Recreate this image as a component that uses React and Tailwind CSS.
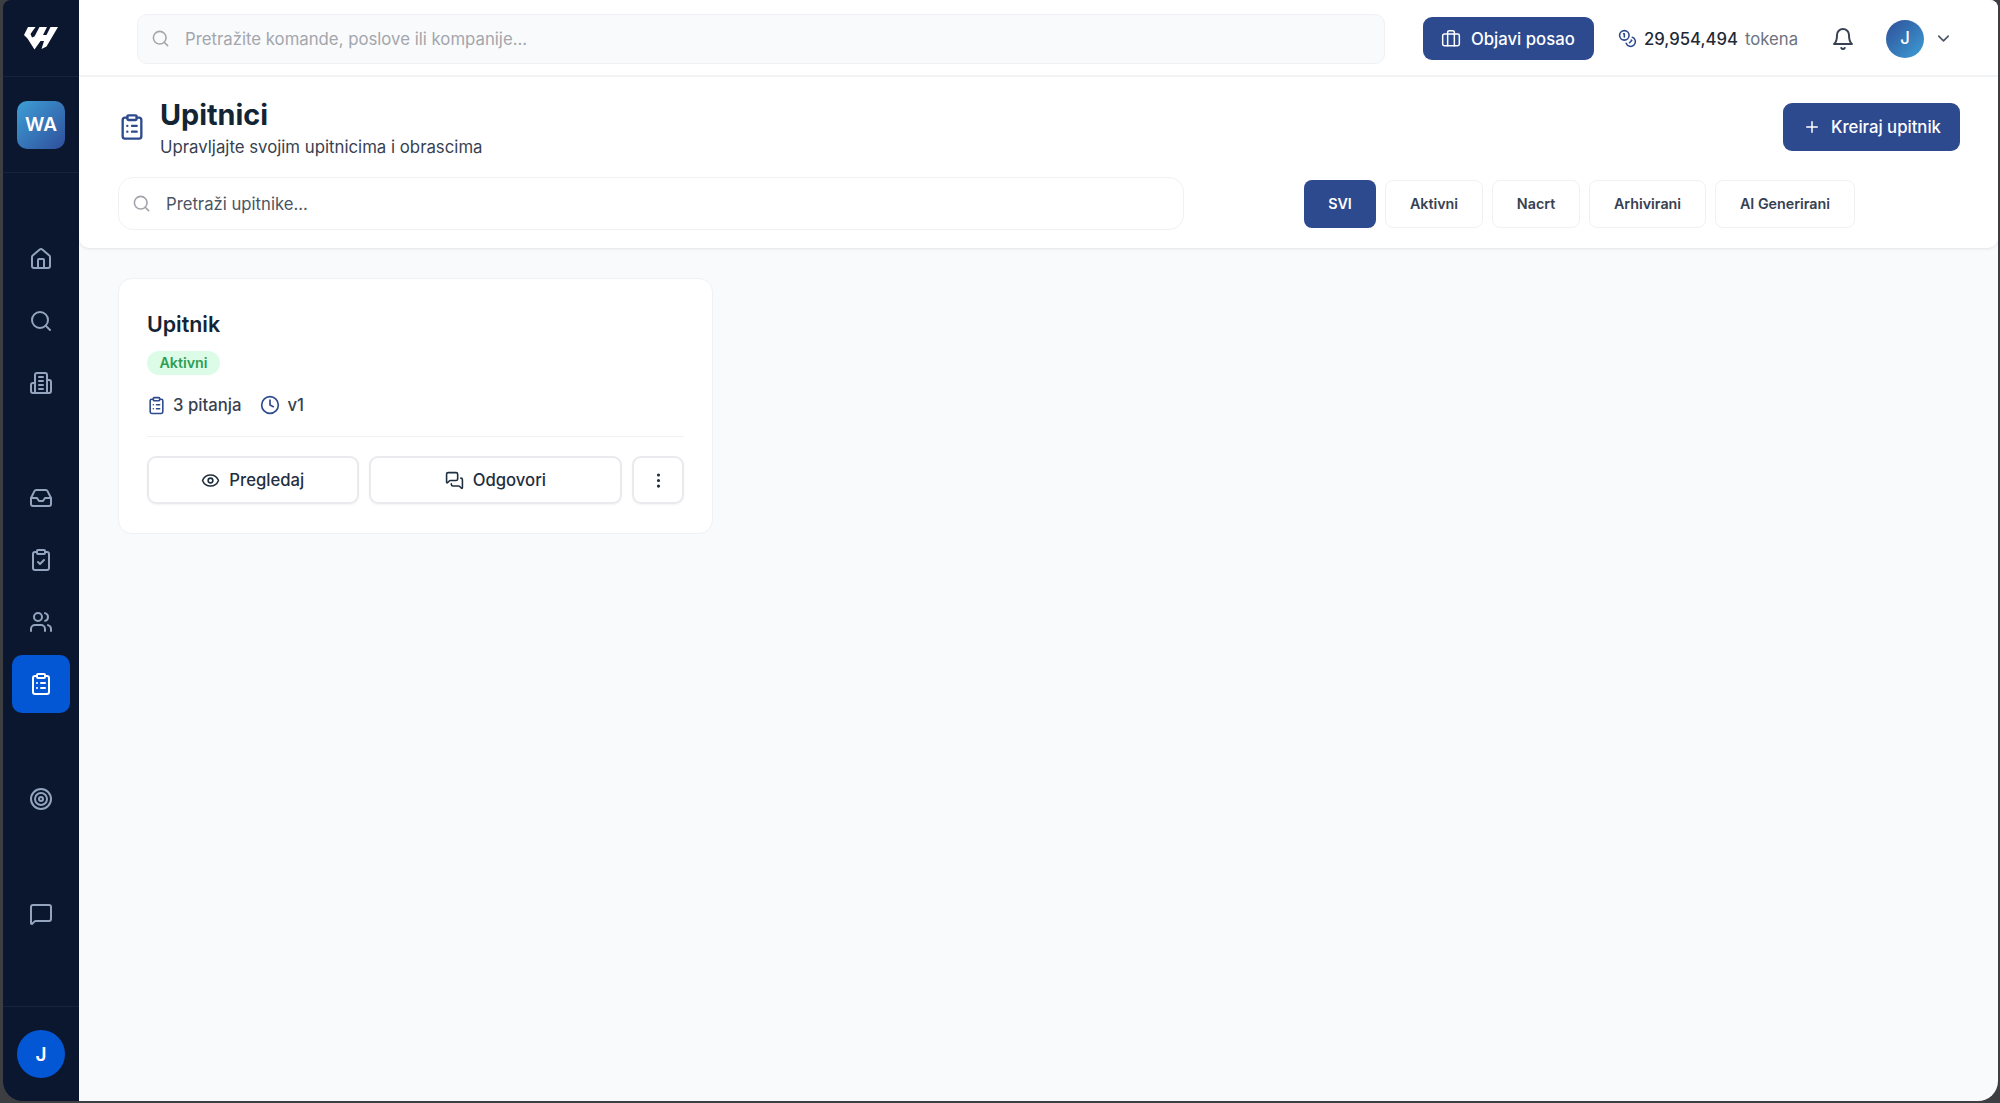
import { Search, House, Inbox, ClipboardCheck, Users, ClipboardList, Target, MessageSquare, Coins, ChevronDown, Plus, Clock, Eye, MessagesSquare, EllipsisVertical } from "lucide-react";

function Svg({ size, children, className, strokeWidth = 2 }) {
  return (
    <svg width={size} height={size} viewBox="0 0 24 24" fill="none" stroke="currentColor" strokeWidth={strokeWidth} strokeLinecap="round" strokeLinejoin="round" className={className}>
      {children}
    </svg>
  );
}

function Building({ size }) {
  return (
    <Svg size={size}>
      <path d="M6 22V4a2 2 0 0 1 2-2h8a2 2 0 0 1 2 2v18Z" />
      <path d="M6 12H4a2 2 0 0 0-2 2v6a2 2 0 0 0 2 2h2" />
      <path d="M18 9h2a2 2 0 0 1 2 2v9a2 2 0 0 1-2 2h-2" />
      <path d="M10 6h4M10 10h4M10 14h4M10 18h4" />
    </Svg>
  );
}

function Case({ size }) {
  return (
    <Svg size={size} strokeWidth={1.8}>
      <rect x="2" y="6" width="20" height="14" rx="2" />
      <path d="M16 20V4a2 2 0 0 0-2-2h-4a2 2 0 0 0-2 2v16" />
    </Svg>
  );
}

function Bell({ size, className }) {
  return (
    <Svg size={size} className={className}>
      <path d="M6 8a6 6 0 0 1 12 0c0 7 3 9 3 9H3s3-2 3-9" />
      <path d="M10.300 21a1.940 1.940 0 0 0 3.400 0" />
    </Svg>
  );
}

function Logo() {
  return (
    <svg width="34" height="23" viewBox="0 0 34 23" fill="#fff">
      <path d="M4 0H11.500L6.500 7L8 10.500L10.500 9.500L15.500 0H23L19 8H22.500L26.500 0H34L22.500 19.500L17.500 22L20 14H16.500L10.500 22.500L3.500 11.500L0 8Z" />
    </svg>
  );
}

function NavItem({ icon: Icon, active }) {
  return (
    <div className={`flex size-[58px] shrink-0 items-center justify-center rounded-[10px] ${active ? "bg-[#0457d4] text-white" : "text-[#94a3be]"}`}>
      <Icon size={24} />
    </div>
  );
}

const groups = [
  [{ icon: House }, { icon: Search }, { icon: Building }],
  [{ icon: Inbox }, { icon: ClipboardCheck }, { icon: Users }, { icon: ClipboardList, active: true }],
  [{ icon: Target }],
  [{ icon: MessageSquare }],
];

function Sidebar() {
  return (
    <aside className="flex w-[76px] shrink-0 flex-col items-center bg-[#0b172f]">
      <div className="flex h-[77px] w-full items-center justify-center border-b border-[#15233d]">
        <Logo />
      </div>
      <div className="flex h-24 w-full items-center justify-center border-b border-[#15233d]">
        <div className="flex size-12 items-center justify-center rounded-[10px] bg-linear-to-br from-[#3d9fd6] to-[#2f4f9c] pt-[2px] text-[19px] font-semibold text-white">WA</div>
      </div>
      <nav className="flex flex-1 flex-col gap-[57px] pt-[57px]">
        {groups.map((g, i) => (
          <div key={i} className="flex flex-col gap-1">
            {g.map((n, j) => <NavItem key={j} {...n} />)}
          </div>
        ))}
      </nav>
      <div className="flex h-[95px] w-full items-center justify-center border-t border-[#15233d]">
        <div className="flex size-12 items-center justify-center rounded-full bg-[#0457d4] pt-[2px] text-[19px] font-semibold text-white">J</div>
      </div>
    </aside>
  );
}

function TopBar() {
  return (
    <div className="flex h-[77px] shrink-0 items-center border-b-2 border-[#f3f4f6] pt-[2px] pl-[58px]">
      <div className="flex h-[50px] w-[1248px] items-center rounded-[10px] border border-[#f0f1f4] bg-[#f9fafb] pl-[13px] text-[16.750px] text-[#a3a6ad]">
        <Search size={19} />
        <span className="mt-[2px] ml-[15px]">Pretražite komande, poslove ili kompanije...</span>
      </div>
      <div className="ml-[38px] flex h-[43px] w-[171px] items-center rounded-[9px] bg-[#2e4a8f] pl-[18px] text-[16.7px] font-medium text-white">
        <Case size={20} />
        <span className="mt-[2px] ml-[10px]">Objavi posao</span>
      </div>
      <div className="ml-6 flex w-[180px] items-center text-[16.7px]">
        <Coins size={19} className="shrink-0 text-[#2e4a8f]" />
        <span className="mt-[2px] ml-[7px] font-medium text-[#1f2937]">29,954,494</span>
        <span className="mt-[2px] ml-[7px] text-[#6b7280]">tokena</span>
      </div>
      <Bell size={24} className="ml-[33px] text-[#374151]" />
      <div className="ml-[31px] flex size-[38px] items-center justify-center rounded-full bg-linear-to-br from-[#2e4f98] to-[#3d9fd6] pt-px text-[16.7px] font-medium text-white">J</div>
      <ChevronDown size={19} className="ml-[10px] text-[#4b5563]" />
    </div>
  );
}

const filters = [
  { label: "Aktivni", w: "w-[98px]" },
  { label: "Nacrt", w: "w-[88px]" },
  { label: "Arhivirani", w: "w-[117px]" },
  { label: "AI Generirani", w: "w-[140px]" },
];

function PageHeader() {
  return (
    <header className="h-[171px] shrink-0 rounded-b-[10px] bg-white pr-[38px] pl-[39px] shadow-[0_1px_3px_rgba(0,0,0,0.09)]">
      <div className="flex h-[100px] items-center">
        <ClipboardList size={28} className="text-[#2e4a8f]" />
        <div className="mt-[4px] ml-[14px] flex-1">
          <h1 className="text-[28.800px] leading-[36px] font-bold text-[#132435]">Upitnici</h1>
          <p className="text-[16.800px] leading-[28px] text-[#374151]">Upravljajte svojim upitnicima i obrascima</p>
        </div>
        <button className="flex h-12 w-[177px] items-center rounded-[9px] bg-[#2e4a8f] pl-[20px] text-[16.7px] font-medium text-white">
          <Plus size={18} />
          <span className="mt-[2px] ml-[10px]">Kreiraj upitnik</span>
        </button>
      </div>
      <div className="flex h-[53px] items-center">
        <div className="flex h-[53px] w-[1066px] items-center rounded-[15px] border border-[#f0f1f4] pl-[13px] text-[16.7px] text-[#4b5563]">
          <Search size={19} className="text-[#a0a3aa]" />
          <span className="mt-[2px] ml-[15px]">Pretraži upitnike...</span>
        </div>
        <div className="ml-[120px] flex gap-[9px] text-[14.3px] font-semibold">
          <div className="flex h-12 w-[72px] items-center justify-center rounded-lg bg-[#2e4a8f] text-white">SVI</div>
          {filters.map((f) => (
            <div key={f.label} className={`flex h-12 items-center justify-center rounded-lg border border-[#f0f1f4] text-[#374151] ${f.w}`}>{f.label}</div>
          ))}
        </div>
      </div>
    </header>
  );
}

function Card() {
  return (
    <article className="mt-[30px] ml-[39px] flex h-[256px] w-[595px] flex-col rounded-[14px] border border-[#f0f1f4] bg-white px-[28px] pt-[28px]">
      <h2 className="text-[21.400px] leading-[34px] font-semibold text-[#132435]">Upitnik</h2>
      <span className="mt-[10px] flex h-6 w-[73px] items-center justify-center rounded-full bg-[#dcfce7] text-[14.3px] font-semibold text-[#2f9e55]">Aktivni</span>
      <div className="mt-[18px] flex h-6 items-center text-[16.7px] font-medium text-[#374151]">
        <ClipboardList size={19} className="text-[#2e4a8f]" />
        <span className="mt-px ml-[7px]">3 pitanja</span>
        <Clock size={20} className="ml-[19px] text-[#2e4a8f]" />
        <span className="mt-px ml-[7px]">v1</span>
      </div>
      <div className="mt-[19px] flex gap-[10px] border-t border-[#f0f1f4] pt-[19px] text-[16.7px] font-medium text-[#1f2f3f]">
        <button className="flex h-12 w-[212px] items-center justify-center gap-[9px] rounded-[9px] border-2 border-[#e8eaed] shadow-xs"><Eye size={19} /><span className="mt-px">Pregledaj</span></button>
        <button className="flex h-12 w-[254px] items-center justify-center gap-[9px] rounded-[9px] border-2 border-[#e8eaed] shadow-xs"><MessagesSquare size={19} /><span className="mt-px">Odgovori</span></button>
        <button className="flex h-12 w-[52px] items-center justify-center rounded-[9px] border-2 border-[#e8eaed] shadow-xs"><EllipsisVertical size={19} /></button>
      </div>
    </article>
  );
}

export default function App() {
  return (
    <div className="h-[1103px] w-[2000px] overflow-hidden bg-[#3d3e41] pr-[2px] pb-[2px] pl-[3px] font-['Inter',sans-serif] whitespace-nowrap">
      <div className="flex h-full overflow-hidden rounded-t-[8px] rounded-b-[20px]">
        <Sidebar />
        <main className="flex flex-1 flex-col bg-[#f9fafc]">
          <div className="bg-white"><TopBar /></div>
          <PageHeader />
          <Card />
        </main>
      </div>
    </div>
  );
}
